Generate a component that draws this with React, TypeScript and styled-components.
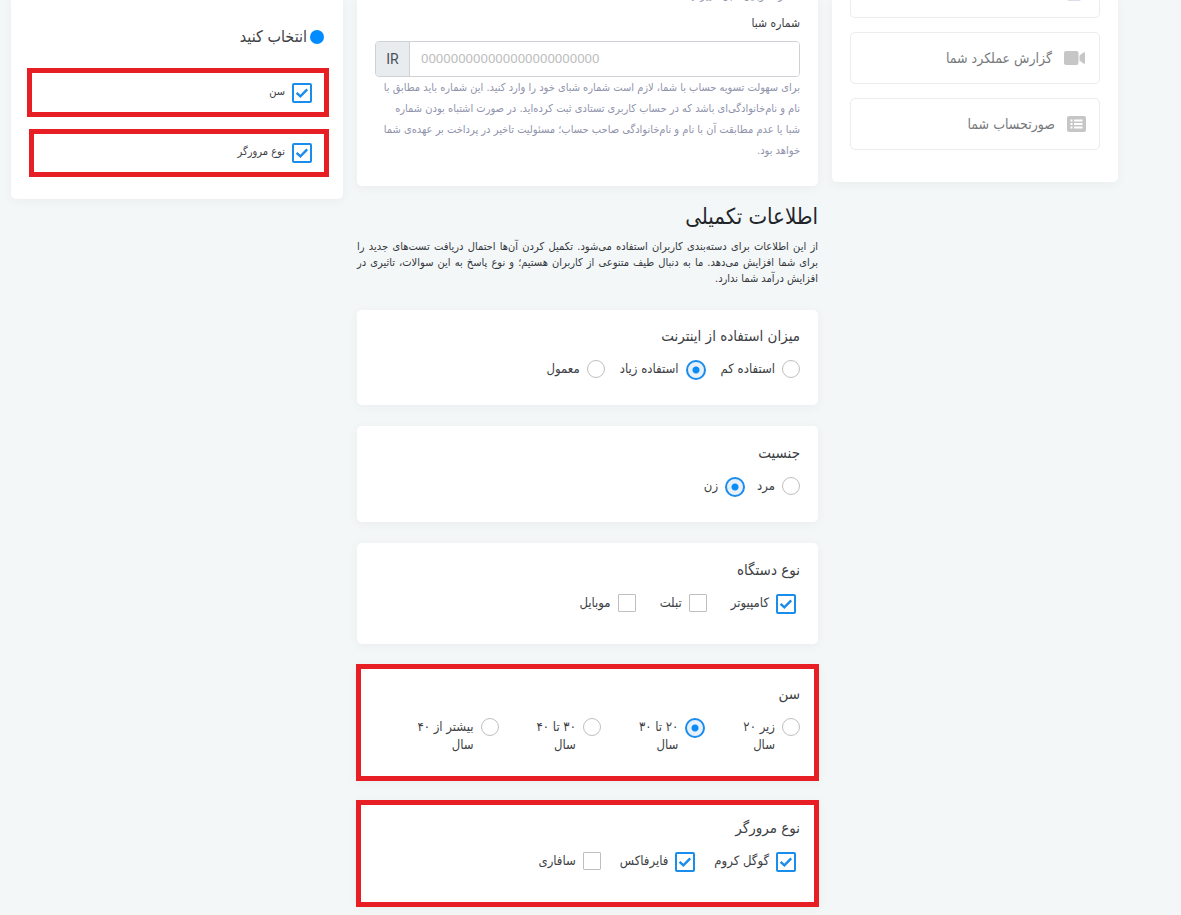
import React from "react";
import styled, { createGlobalStyle, css } from "styled-components";

const GlobalStyle = createGlobalStyle`
  *, *::before, *::after { box-sizing: border-box; }
  body {
    margin: 0;
    background: #f4f7f8;
    color: #3d4145;
    font-family: "DejaVu Sans Condensed", "DejaVu Sans", sans-serif;
    font-size: 13px;
  }
  h2, h3, p, fieldset, legend, ul { margin: 0; padding: 0; border: 0; font-weight: 400; }
`;

const Page = styled.main`
  display: grid;
  grid-template-columns: 286fr 461fr 332fr;
  gap: 14px;
  align-items: start;
  padding-right: 63px;
  padding-left: 11px;
  padding-bottom: 8px;
`;

const Card = styled.section<{ $framed?: boolean }>`
  background: #fff;
  border-radius: 5px;
  box-shadow: 0 2px 10px rgba(60, 80, 90, 0.06);
  ${(p) =>
    p.$framed &&
    css`
      outline: 5px solid #e81e25;
      outline-offset: -4px;
      border-radius: 0;
    `}
`;

const TopCard = styled(Card)`
  border-radius: 0 0 5px 5px;
`;

const MenuCard = styled(TopCard)`
  padding: 0 18px 32px;
`;

const MenuList = styled.ul`
  display: grid;
  gap: 14px;
  list-style: none;
`;

const MenuLink = styled.a<{ $cut?: boolean }>`
  display: flex;
  align-items: ${(p) => (p.$cut ? "flex-start" : "center")};
  gap: 12px;
  height: ${(p) => (p.$cut ? "18px" : "52px")};
  padding: 0 13px;
  border: 1px solid #ebecee;
  border-top-width: ${(p) => (p.$cut ? "0" : "1px")};
  border-radius: ${(p) => (p.$cut ? "0 0 5px 5px" : "5px")};
  color: #77797c;
  font-size: 14px;
  text-decoration: none;
  svg { display: block; flex: none; }
`;

const BankCard = styled(TopCard)`
  padding: 0 18px 25px;
`;

const ClippedNote = styled.p`
  display: flex;
  align-items: flex-end;
  height: 3px;
  overflow: hidden;
  color: #8f93ab;
  font-size: 11px;
  line-height: 14px;
`;

const FieldLabel = styled.label`
  display: block;
  margin: 10px 0 8px;
  font-size: 12px;
  line-height: 20px;
`;

const InputGroup = styled.div`
  display: flex;
  direction: ltr;
  height: 36px;
  border: 1px solid #ced2d6;
  border-radius: 4px;
  overflow: hidden;
`;

const Prefix = styled.span`
  display: grid;
  place-items: center;
  width: 34px;
  background: #e9ecef;
  border-right: 1px solid #ced2d6;
  color: #495057;
  font: 14px Roboto, sans-serif;
`;

const IbanInput = styled.input`
  flex: 1;
  min-width: 0;
  padding: 0 11px 2px;
  border: 0;
  outline: 0;
  background: #fff;
  font: 13px "Noto Sans", sans-serif;
  &::placeholder { color: #bcbcbc; opacity: 1; }
`;

const Help = styled.p`
  color: #8f93ab;
  font-size: 11px;
  line-height: 21px;
`;

const Title = styled.h2`
  margin-top: 15px;
  color: #212529;
  font-size: 22px;
  line-height: 32px;
`;

const Intro = styled.p`
  margin: 6px 0 23px;
  color: #33383c;
  font-size: 11px;
  line-height: 16px;
  text-align: justify;
`;

const Stack = styled.div`
  display: grid;
  gap: 21px;
`;

const Group = styled.fieldset`
  min-width: 0;
`;

const Question = styled(Card)<{ $top: number; $bottom: number }>`
  padding: ${(p) => p.$top}px 18px ${(p) => p.$bottom}px;
`;

const Legend = styled.legend`
  display: block;
  color: #3d4145;
  font-size: 15px;
  line-height: 20px;
`;

const Options = styled.div<{ $gap: number; $box?: boolean }>`
  display: flex;
  gap: ${(p) => p.$gap}px;
  margin-top: 14px;
  padding-right: ${(p) => (p.$box ? "4px" : "0")};
`;

const Option = styled.label<{ $small?: boolean }>`
  display: flex;
  align-items: flex-start;
  gap: 7px;
  font-size: ${(p) => (p.$small ? "11px" : "13px")};
  line-height: 18px;
  white-space: nowrap;
`;

const control = css`
  appearance: none;
  flex: none;
  width: 18px;
  height: 18px;
  margin: 0;
  border: 1px solid #bfbfbf;
  &:checked {
    width: 20px;
    height: 20px;
    border: 2px solid #1a8cec;
  }
`;

const Radio = styled.input.attrs({ type: "radio" })`
  ${control}
  border-radius: 50%;
  &:checked {
    background: radial-gradient(circle, #0a8cf8 3px, #e8f1fb 4px);
  }
`;

const Box = styled.span`
  display: grid;
  flex: none;
  > * { grid-area: 1 / 1; }
  svg { pointer-events: none; place-self: center; }
`;

const CheckInput = styled.input.attrs({ type: "checkbox" })`
  ${control}
  border-radius: 1px;
  &:checked { border-radius: 2px; }
  & + svg { visibility: hidden; }
  &:checked + svg { visibility: visible; }
`;

const FilterCard = styled(TopCard)`
  padding: 25px 14px 22px 16px;
`;

const FilterTitle = styled.h3`
  display: flex;
  align-items: center;
  gap: 3px;
  margin: 0 5px 19px 0;
  font-size: 16px;
  line-height: 24px;
`;

const Dot = styled.span`
  width: 14px;
  height: 14px;
  border-radius: 50%;
  background: #008cff;
`;

const FilterRow = styled.div`
  display: flex;
  align-items: center;
  height: 49px;
  padding: 0 12px;
  border: 5px solid #e81e25;
  & + & { height: 48px; margin-top: 12px; margin-left: 2px; }
`;

function Check({ checked }: { checked?: boolean }) {
  return (
    <Box>
      <CheckInput defaultChecked={checked} />
      <svg width="14" height="14" viewBox="0 0 14 14" fill="none" stroke="#1a8cec" strokeWidth="2.4" aria-hidden="true">
        <path d="M1.6 6.8 L5.4 10.4 L12.2 3.4" />
      </svg>
    </Box>
  );
}

const VideoIcon = () => (
  <svg width="22" height="16" viewBox="0 0 22 16" fill="#c6c6c6" aria-hidden="true">
    <rect x="0" y="1" width="14.5" height="14" rx="2" />
    <path d="M15.5 5.6 L19.4 2.6 Q21 1.6 21 3.2 V12.8 Q21 14.4 19.4 13.4 L15.5 10.4 Z" />
  </svg>
);

const ListIcon = () => (
  <svg width="19" height="16" viewBox="0 0 19 16" aria-hidden="true">
    <rect width="19" height="16" rx="2" fill="#c6c6c6" />
    <path
      d="M3.5 3.5h2v2h-2zM3.5 7h2v2h-2zM3.5 10.5h2v2h-2zM7 3.5h8.5v2H7zM7 7h8.5v2H7zM7 10.5h8.5v2H7z"
      fill="#fff"
    />
  </svg>
);

const CardIcon = () => (
  <svg width="23" height="2" viewBox="0 0 23 2" aria-hidden="true">
    <path d="M4 0h14q-1 1-2 1H6Q5 1 4 0" fill="#dcdde8" />
  </svg>
);

type Item = { text: React.ReactNode; on?: boolean };
type QuestionProps = {
  title: string;
  name: string;
  kind: "radio" | "check";
  items: Item[];
  gap: number;
  top: number;
  bottom: number;
  framed?: boolean;
};

function QuestionCard({ title, name, kind, items, gap, top, bottom, framed }: QuestionProps) {
  return (
    <Question $top={top} $bottom={bottom} $framed={framed}>
      <Group>
        <Legend>{title}</Legend>
        <Options $gap={gap} $box={kind === "check"}>
          {items.map((item, i) => (
            <Option key={i}>
              {kind === "radio" ? <Radio name={name} defaultChecked={item.on} /> : <Check checked={item.on} />}
              <span>{item.text}</span>
            </Option>
          ))}
        </Options>
      </Group>
    </Question>
  );
}

const twoLines = (a: string) => (
  <>
    {a}
    <br />
    سال
  </>
);

export default function App() {
  return (
    <Page dir="rtl" lang="fa">
      <GlobalStyle />
      <MenuCard as="nav">
        <MenuList>
          <li><MenuLink href="#" $cut aria-label="حساب"><CardIcon /></MenuLink></li>
          <li><MenuLink href="#"><VideoIcon />گزارش عملکرد شما</MenuLink></li>
          <li><MenuLink href="#"><ListIcon />صورتحساب شما</MenuLink></li>
        </MenuList>
      </MenuCard>

      <div>
        <BankCard>
          <ClippedNote>شماره موبایل قابل تغییر نیست</ClippedNote>
          <FieldLabel htmlFor="iban">شماره شبا</FieldLabel>
          <InputGroup>
            <Prefix>IR</Prefix>
            <IbanInput id="iban" placeholder="000000000000000000000000" />
          </InputGroup>
          <Help>
            برای سهولت تسویه حساب با شما، لازم است شماره شبای خود را وارد کنید. این شماره باید مطابق با
            <br />
            نام و نام‌خانوادگی‌ای باشد که در حساب کاربری تستادی ثبت کرده‌اید. در صورت اشتباه بودن شماره
            <br />
            شبا یا عدم مطابقت آن با نام و نام‌خانوادگی صاحب حساب؛ مسئولیت تاخیر در پرداخت بر عهده‌ی شما
            <br />
            خواهد بود.
          </Help>
        </BankCard>

        <Title>اطلاعات تکمیلی</Title>
        <Intro>
          از این اطلاعات برای دسته‌بندی کاربران استفاده می‌شود. تکمیل کردن آن‌ها احتمال دریافت تست‌های جدید را
          برای شما افزایش می‌دهد. ما به دنبال طیف متنوعی از کاربران هستیم؛ و نوع پاسخ به این سوالات، تاثیری در
          افزایش درآمد شما ندارد.
        </Intro>

        <Stack>
          <QuestionCard
            title="میزان استفاده از اینترنت" name="usage" kind="radio" gap={15} top={16} bottom={25}
            items={[{ text: "استفاده کم" }, { text: "استفاده زیاد", on: true }, { text: "معمول" }]}
          />
          <QuestionCard
            title="جنسیت" name="gender" kind="radio" gap={12} top={17} bottom={25}
            items={[{ text: "مرد" }, { text: "زن", on: true }]}
          />
          <QuestionCard
            title="نوع دستگاه" name="device" kind="check" gap={24} top={17} bottom={30}
            items={[{ text: "کامپیوتر", on: true }, { text: "تبلت" }, { text: "موبایل" }]}
          />
          <QuestionCard
            title="سن" name="age" kind="radio" gap={38} top={19} bottom={26} framed
            items={[
              { text: twoLines("زیر ۲۰") },
              { text: twoLines("۲۰ تا ۳۰"), on: true },
              { text: twoLines("۳۰ تا ۴۰") },
              { text: twoLines("بیشتر از ۴۰") },
            ]}
          />
          <QuestionCard
            title="نوع مرورگر" name="browser" kind="check" gap={19} top={17} bottom={34} framed
            items={[{ text: "گوگل کروم", on: true }, { text: "فایرفاکس", on: true }, { text: "سافاری" }]}
          />
        </Stack>
      </div>

      <FilterCard as="aside">
        <FilterTitle><Dot />انتخاب کنید</FilterTitle>
        <FilterRow><Option $small><Check checked /><span>سن</span></Option></FilterRow>
        <FilterRow><Option $small><Check checked /><span>نوع مرورگر</span></Option></FilterRow>
      </FilterCard>
    </Page>
  );
}
